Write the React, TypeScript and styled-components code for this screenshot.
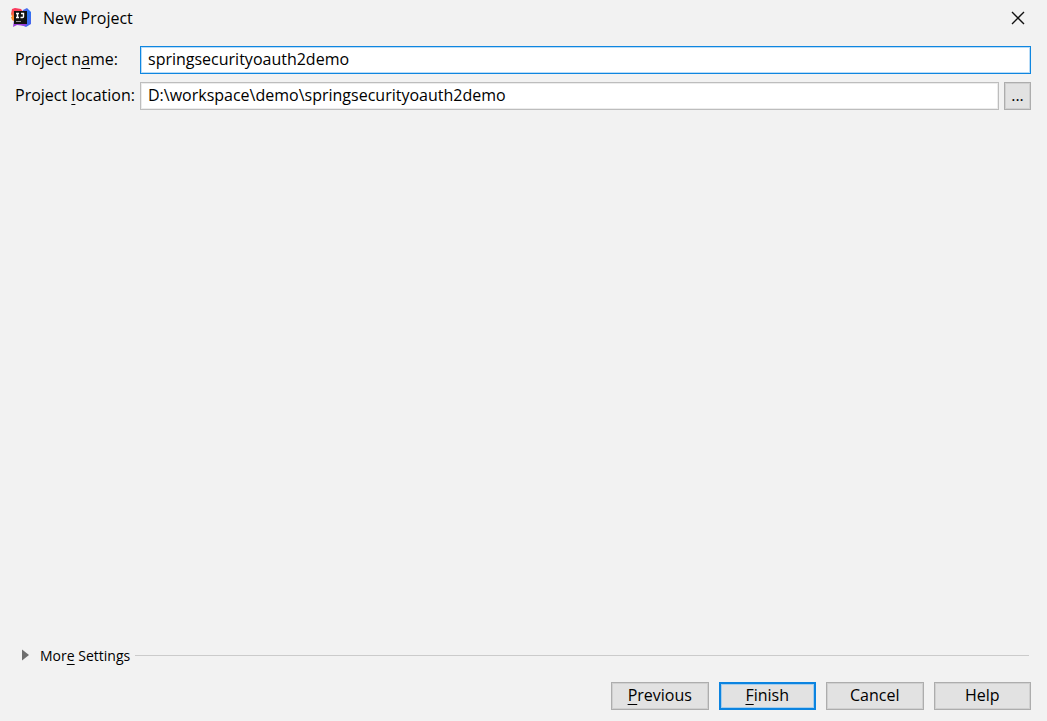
import React, { useState } from "react";
import styled, { createGlobalStyle } from "styled-components";

const GlobalStyle = createGlobalStyle`
  *, *::before, *::after { box-sizing: border-box; }
  body {
    margin: 0;
    background: #f2f2f2;
    color: #000;
    font-family: "Open Sans", "Noto Sans", sans-serif;
    font-size: 16px;
    line-height: 24px;
  }
  button, input { font: inherit; color: inherit; }
`;

const Dialog = styled.main`
  display: flex;
  flex-direction: column;
  min-height: 100vh;
  padding-bottom: 11px;
`;

const TitleBar = styled.header`
  display: flex;
  align-items: center;
  height: 36px;
  padding: 0 20px 0 10px;
`;

const Title = styled.h1`
  flex: 1;
  margin: 0 0 0 11px;
  font-size: 16px;
  font-weight: 400;
`;

const CloseButton = styled.button`
  display: flex;
  align-items: center;
  justify-content: center;
  width: 18px;
  height: 18px;
  padding: 0;
  border: 0;
  background: transparent;
`;

const Form = styled.form`
  display: grid;
  grid-template-columns: 119px 1fr;
  gap: 8px 6px;
  padding: 10px 16px 0 15px;
`;

const Label = styled.label`
  line-height: 26px;
  white-space: nowrap;
`;

const Field = styled.div`
  display: flex;
  gap: 5px;
  min-width: 0;
`;

const TextInput = styled.input<{ $active?: boolean }>`
  flex: 1;
  min-width: 0;
  height: 28px;
  padding: 0 7px 2px;
  border: 1px solid ${(p) => (p.$active ? "#0f86e0" : "#bdbdbd")};
  border-radius: 0;
  outline: 0;
  background: #fff;
  box-shadow: inset 0 0 0 1px ${(p) => (p.$active ? "#b9dcf7" : "#ececec")};
`;

const PushButton = styled.button<{ $primary?: boolean }>`
  height: 28px;
  padding: 0 0 2px;
  border: ${(p) => (p.$primary ? "2px solid #0c84e0" : "1px solid #adadad")};
  border-radius: 0;
  background: #e2e2e2;
  box-shadow: inset 0 0 0 1px ${(p) => (p.$primary ? "#a5cdec" : "#d0d0d0")};
  line-height: 22px;
`;

const BrowseButton = styled(PushButton)`
  width: 27px;
`;

const MoreSettings = styled.div`
  display: flex;
  align-items: center;
  gap: 5px;
  margin-top: auto;
  padding: 0 18px 0 22px;
`;

const Disclosure = styled.button`
  display: flex;
  align-items: center;
  gap: 11px;
  padding: 0;
  border: 0;
  background: transparent;
  font-size: 14px;
  line-height: 20px;
`;

const DisclosureText = styled.span`
  padding-top: 2px;
`;

const Rule = styled.hr`
  flex: 1;
  margin: 0;
  border: 0;
  border-top: 1px solid #cbcbcb;
`;

const Footer = styled.footer`
  display: grid;
  grid-template-columns: repeat(4, 1fr);
  gap: 10px;
  align-self: flex-end;
  width: 420px;
  margin: 16px 16px 0 0;
`;

const Key = styled.span`
  text-decoration: underline;
  text-decoration-thickness: 1px;
  text-underline-offset: 3px;
  text-decoration-skip-ink: none;
`;

const AppLogo = () => (
  <svg width="22" height="22" viewBox="0 0 22 22" aria-hidden="true">
    <defs>
      <linearGradient id="warm" x1="0" y1="0" x2="0" y2="1">
        <stop offset="0" stopColor="#fb2f63" />
        <stop offset="0.45" stopColor="#f9643f" />
        <stop offset="0.65" stopColor="#f79a2b" />
        <stop offset="1" stopColor="#c43fb8" />
      </linearGradient>
      <linearGradient id="cool" x1="0" y1="0" x2="1" y2="1">
        <stop offset="0" stopColor="#8a5be8" />
        <stop offset="0.5" stopColor="#2a76f2" />
        <stop offset="1" stopColor="#5060ec" />
      </linearGradient>
    </defs>
    <path d="M2 2l3-1 6 1 3 4-7 9-4-3-2-5z" fill="url(#warm)" />
    <path d="M1 10l4-1 2 7-5-3z" fill="#f98a28" />
    <path d="M13 3l4-2 4 4v12l-5 3-7-3z" fill="url(#cool)" />
    <path d="M4 13l4-1 9 6-2 1-8-1-4 2z" fill="#9a40dc" />
    <path d="M4 4h13v13H4z" fill="#111" />
    <path d="M6 6.5h3M7.5 6.5v4M6 10.5h3M11 6.5h2.5v3q0 1-1 1h-2" fill="none" stroke="#fff" strokeWidth="1.4" />
    <path d="M6 14.5h5" stroke="#999" strokeWidth="1" />
  </svg>
);

export default function App() {
  const [name, setName] = useState("springsecurityoauth2demo");
  const [location, setLocation] = useState("D:\\workspace\\demo\\springsecurityoauth2demo");

  return (
    <>
      <GlobalStyle />
      <Dialog>
        <TitleBar>
          <AppLogo />
          <Title>New Project</Title>
          <CloseButton type="button" aria-label="Close">
            <svg width="14" height="14" viewBox="0 0 14 14" aria-hidden="true">
              <path d="M1 1l12 12M13 1L1 13" stroke="#111" strokeWidth="1.4" />
            </svg>
          </CloseButton>
        </TitleBar>
        <Form>
          <Label htmlFor="name">Project n<Key>a</Key>me:</Label>
          <Field>
            <TextInput id="name" $active value={name} onChange={(e) => setName(e.target.value)} />
          </Field>
          <Label htmlFor="location">Project <Key>l</Key>ocation:</Label>
          <Field>
            <TextInput id="location" value={location} onChange={(e) => setLocation(e.target.value)} />
            <BrowseButton type="button" aria-label="Browse">...</BrowseButton>
          </Field>
        </Form>
        <MoreSettings>
          <Disclosure type="button" aria-expanded="false">
            <svg width="7" height="12" viewBox="0 0 7 12" aria-hidden="true">
              <path d="M0 0.5l7 5.5-7 5.5z" fill="#6e6e6e" />
            </svg>
            <DisclosureText>Mor<Key>e</Key> Settings</DisclosureText>
          </Disclosure>
          <Rule />
        </MoreSettings>
        <Footer>
          <PushButton type="button"><Key>P</Key>revious</PushButton>
          <PushButton type="button" $primary><Key>F</Key>inish</PushButton>
          <PushButton type="button">Cancel</PushButton>
          <PushButton type="button">Help</PushButton>
        </Footer>
      </Dialog>
    </>
  );
}
